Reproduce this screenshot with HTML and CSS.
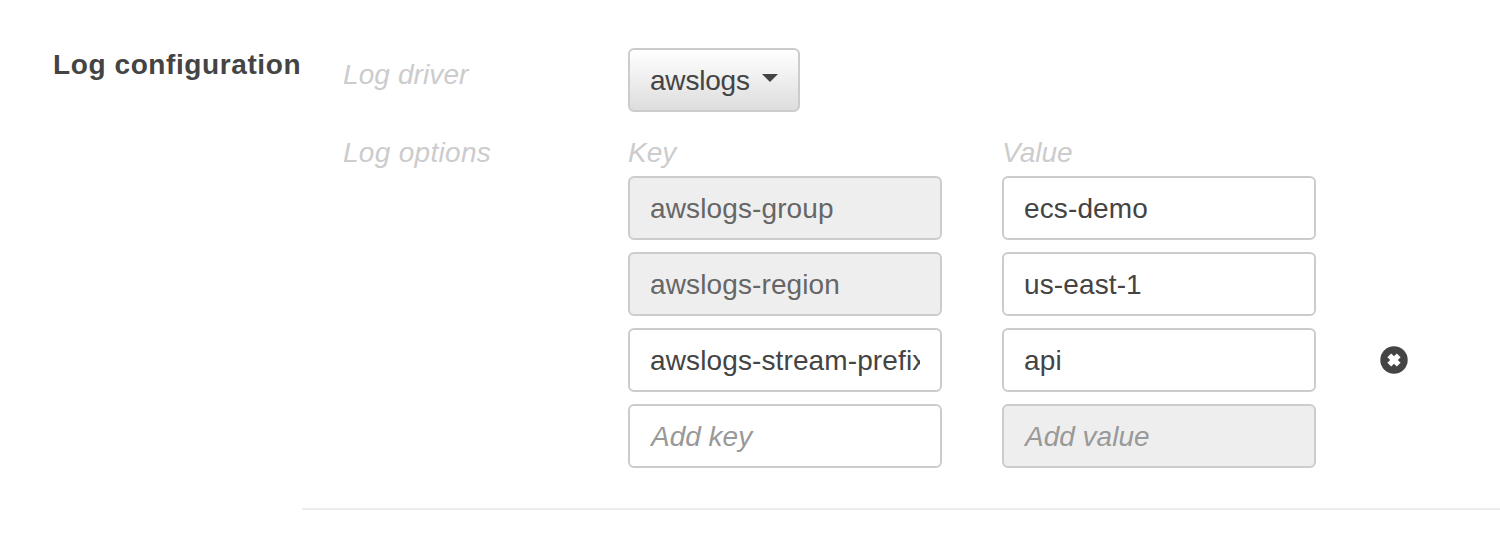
FILE: index.html
```html
<!DOCTYPE html>
<html lang="en">
<head>
<meta charset="utf-8">
<title>Log configuration</title>
<link rel="stylesheet" href="styles.css">
</head>
<body>
<section class="section">
  <h2 class="section-title">Log configuration</h2>
  <div class="section-body">
    <div class="row driver-row">
      <span class="label">Log driver</span>
      <button class="select" type="button"><span class="select-text">awslogs</span><svg class="caret" width="16" height="8" viewBox="0 0 16 8"><path d="M0 0H16L8 8Z" fill="#444"/></svg></button>
    </div>
    <div class="row">
      <span class="label wide">Log options</span>
      <div class="options">
        <span class="label">Key</span><span class="label">Value</span><span></span>
        <input class="field" value="awslogs-group" disabled>
        <input class="field" value="ecs-demo"><span></span>
        <input class="field" value="awslogs-region" disabled>
        <input class="field" value="us-east-1"><span></span>
        <input class="field" value="awslogs-stream-prefix">
        <input class="field" value="api">
        <button class="remove" type="button" aria-label="Remove"><svg width="28" height="28" viewBox="0 0 28 28"><circle cx="14" cy="14" r="13.7" fill="#444"/><path d="M9.3 9.3L18.7 18.7M18.7 9.3L9.3 18.7" stroke="#fff" stroke-width="5.4"/></svg></button>
        <input class="field" placeholder="Add key">
        <input class="field" placeholder="Add value" disabled>
      </div>
    </div>
  </div>
</section>
</body>
</html>
```
FILE: styles.css
```css
* { box-sizing: border-box; }
body {
  margin: 0;
  height: 542px;
  overflow: hidden;
  background: #fff;
  color: #444;
  font: 28px/32px "Liberation Sans", Arial, sans-serif;
}
.section { display: flex; }
.section-title {
  width: 302px;
  margin: 0;
  padding: 49px 0 0 53px;
  font-size: 28px;
  font-weight: bold;
  letter-spacing: 0.6px;
  white-space: nowrap;
}
.section-body {
  flex: 1;
  height: 510px;
  padding: 48px 0 0 41px;
  border-bottom: 2px solid #ececec;
}
.row { display: grid; grid-template-columns: 285px 1fr; }
.driver-row { height: 88px; padding-bottom: 24px; }
.label { padding-top: 1px; color: #ccc; font-style: italic; }
.driver-row .label { padding-top: 11px; letter-spacing: 0.1px; }
.select {
  display: flex;
  align-items: center;
  justify-content: space-between;
  width: 172px;
  height: 64px;
  padding: 1px 20px 0;
  border: 2px solid #ccc;
  border-radius: 6px;
  background: linear-gradient(#fff, #ddd);
  color: #444;
  font: inherit;
}
.select-text { letter-spacing: -0.2px; }
.caret { margin-top: -5px; }
.options {
  display: grid;
  grid-template-columns: 314px 314px 28px;
  grid-template-rows: 28px repeat(4, 64px);
  column-gap: 60px;
  row-gap: 12px;
}
.field {
  width: 314px;
  height: 64px;
  padding: 1px 20px 0;
  border: 2px solid #ccc;
  border-radius: 6px;
  background: #fff;
  color: #444;
  font: inherit;
  letter-spacing: 0.12px;
}
.wide { letter-spacing: 0.3px; }
.field:disabled { background: #eee; color: #666; }
.field::placeholder { color: #999; font-style: italic; text-indent: 1px; letter-spacing: 0; }
.remove {
  align-self: center;
  width: 28px;
  height: 28px;
  margin-left: 4px;
  padding: 0;
  border: 0;
  background: none;
}
.remove svg { display: block; }
```
